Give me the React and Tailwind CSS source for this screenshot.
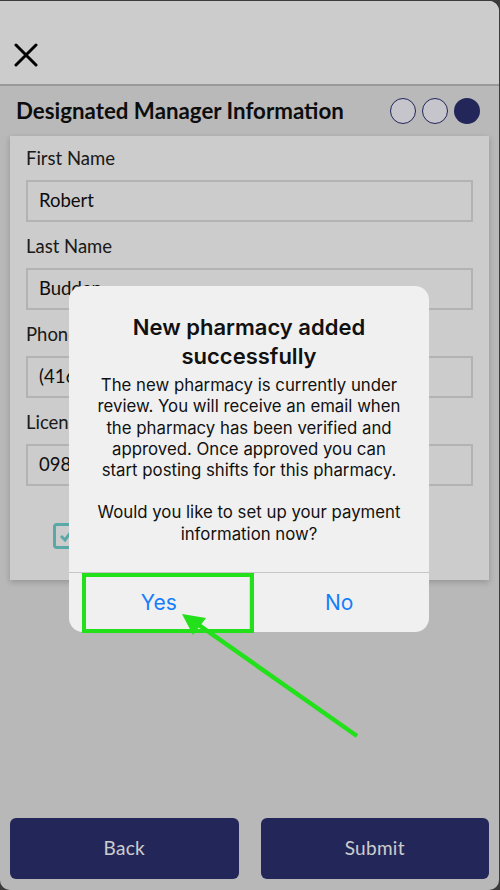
import React from 'react';

const Field = ({ label, value }) => (
  <div className="flex flex-col">
    <label className="text-[18.5px] leading-[22px] text-[#222] mb-[11px]">{label}</label>
    <div className="h-[42px] border-2 border-[#e0e0e0] flex items-center px-[11px] text-[18.5px] text-[#111]">
      {value}
    </div>
  </div>
);

const StepDots = () => (
  <div className="flex gap-[6px]">
    <div className="w-[26px] h-[26px] rounded-full border-[1.5px] border-[#2b3070] bg-[#f7f7fe]" />
    <div className="w-[26px] h-[26px] rounded-full border-[1.5px] border-[#2b3070] bg-[#f7f7fe]" />
    <div className="w-[26px] h-[26px] rounded-full bg-[#2b3070]" />
  </div>
);

const bodyLines = [
  'The new pharmacy is currently under',
  'review. You will receive an email when',
  'the pharmacy has been verified and',
  'approved. Once approved you can',
  'start posting shifts for this pharmacy.',
];

const App = () => {
  return (
    <div className="w-[500px] h-[890px] bg-[#3b3b3b] pt-px pr-px overflow-hidden">
      <div
        className="relative w-full h-full bg-[#e6e6e6] rounded-tr-[10px] rounded-b-[10px] overflow-hidden flex flex-col"
        style={{ fontFamily: 'Lato, "Open Sans", sans-serif' }}
      >
        {/* header */}
        <div className="h-[85px] bg-white border-b-2 border-[#c0c0c0] flex items-end px-[14px] pb-[17px]">
          <svg width="24" height="24" viewBox="0 0 24 24" className="text-black">
            <path d="M2 2 L22 22 M22 2 L2 22" stroke="currentColor" strokeWidth="3" strokeLinecap="round" />
          </svg>
        </div>

        {/* section title */}
        <div className="h-[50px] bg-[#e8e8e8] flex items-center justify-between pl-[16px] pr-[19px]">
          <h1 className="text-[22.3px] font-bold text-[#111]">Designated Manager Information</h1>
          <StepDots />
        </div>

        {/* form card */}
        <div className="mx-[10px] h-[444px] bg-white shadow-[0_2px_6px_rgba(0,0,0,0.2)] px-[16px] pt-[11px] flex flex-col gap-[13px]">
          <Field label="First Name" value="Robert" />
          <Field label="Last Name" value="Budden" />
          <Field label="Phone" value="(416) 555-0198" />
          <Field label="License Number" value="0982145" />
          <div className="flex items-center gap-3 pl-[27px] pt-[24px]">
            <div className="w-[26px] h-[26px] rounded-[4px] border-[3px] border-[#72d2d2] flex items-center justify-center">
              <svg width="16" height="16" viewBox="0 0 16 16">
                <path d="M3 8 L7 12 L13 4" stroke="#72d2d2" strokeWidth="3" fill="none" />
              </svg>
            </div>
            <span className="text-[16px] text-[#222]">I confirm this information is correct</span>
          </div>
        </div>

        <div className="flex-1" />

        {/* bottom buttons */}
        <div className="flex gap-[22px] px-[10px] pb-[11px]">
          <button className="flex-1 h-[61px] rounded-[6px] bg-[#2b3070] text-white text-[19px] tracking-[0.3px]">Back</button>
          <button className="flex-1 h-[61px] rounded-[6px] bg-[#2b3070] text-white text-[19px] tracking-[0.3px]">Submit</button>
        </div>

        {/* dim overlay */}
        <div className="absolute inset-0 bg-black/20" />

        {/* alert */}
        <div
          className="absolute left-[69px] top-[285px] w-[360px] rounded-[14px] bg-[#f0f0f0] overflow-hidden flex flex-col"
          style={{ fontFamily: 'Inter, Roboto, sans-serif' }}
        >
          <div className="px-[8px] pt-[27px] pb-[27px] text-center text-[#111]">
            <h2 className="text-[22px] leading-[29px] font-semibold">New pharmacy added<br />successfully</h2>
            <p className="mt-[4px] text-[16.8px] leading-[21.3px] whitespace-nowrap">
              {bodyLines.map((l) => (
                <span key={l} className="block">{l}</span>
              ))}
            </p>
            <p className="mt-[21px] text-[16.8px] leading-[21.3px] whitespace-nowrap">
              <span className="block">Would you like to set up your payment</span>
              <span className="block">information now?</span>
            </p>
          </div>
          <div className="h-[60px] border-t border-[#c6c6c6] flex">
            <button className="flex-1 text-[21px] text-[#157efb] border-r border-[#dcdcdc]">Yes</button>
            <button className="flex-1 text-[21px] text-[#157efb]">No</button>
          </div>
        </div>

        {/* annotation */}
        <svg className="absolute inset-0 pointer-events-none" width="500" height="890">
          <rect x="84" y="574" width="168" height="56" fill="none" stroke="#22e01a" strokeWidth="4" />
          <line x1="357" y1="735" x2="196" y2="622" stroke="#22e01a" strokeWidth="4.5" />
          <polygon points="182,613 206,617 193,634" fill="#22e01a" />
        </svg>
      </div>
    </div>
  );
};

export default App;
